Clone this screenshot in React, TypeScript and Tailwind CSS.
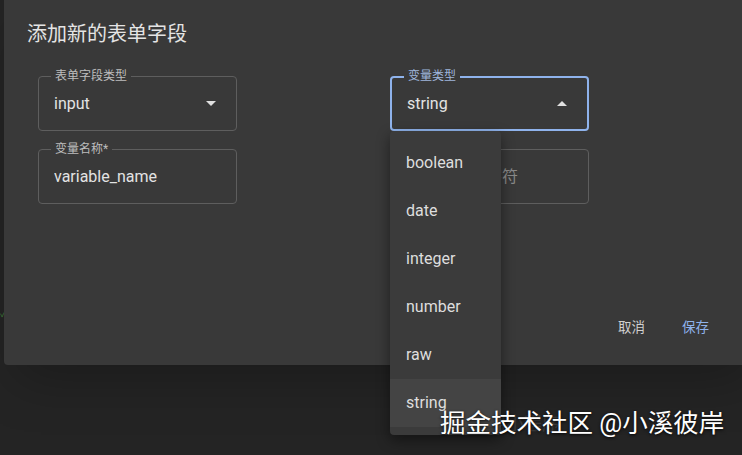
// Add-form-field dialog with the variable type select opened

const FONT = { fontFamily: '"Roboto", "Noto Sans CJK SC", "Noto Sans", sans-serif' };

const TYPES = ['boolean', 'date', 'integer', 'number', 'raw', 'string'];

function Caret({ up = false }: { up?: boolean }) {
  return (
    <svg width="10" height="5" viewBox="0 0 10 5" className="shrink-0">
      {up ? <path d="M0 5 L5 0 L10 5 Z" fill="#e0e0e0" /> : <path d="M0 0 L5 5 L10 0 Z" fill="#e0e0e0" />}
    </svg>
  );
}

function OutlinedField({
  label,
  value,
  placeholder,
  focused = false,
  select,
}: {
  label?: string;
  value?: string;
  placeholder?: string;
  focused?: boolean;
  select?: 'up' | 'down';
}) {
  return (
    <div
      className={`relative flex h-[55px] w-[199px] items-center rounded-[4px] px-[15px] ${
        focused ? 'border-2 border-[#8fb3ec] px-[14px]' : 'border border-[#5e5e5e]'
      }`}
    >
      {label && (
        <span
          className={`absolute left-[12px] top-[-9px] bg-[#393939] px-[4px] text-[12px] leading-[16px] ${
            focused ? 'left-[11px] top-[-10px] text-[#9fb6dc]' : 'text-[#bdbdbd]'
          }`}
        >
          {label}
        </span>
      )}
      <span className={`flex-1 truncate ${value ? 'text-[16px] text-[#e3e3e3]' : 'text-[16px] text-[#8a8a8a]'}`}>
        {value ?? placeholder}
      </span>
      {select && (
        <span className="mr-[5px]">
          <Caret up={select === 'up'} />
        </span>
      )}
    </div>
  );
}

export default function App() {
  return (
    <div className="relative h-[455px] w-[742px] overflow-hidden bg-[#242424]" style={FONT}>
      {/* underlying page, mostly hidden */}
      <span className="absolute left-[0px] top-[306px] text-[10px] text-[#3f7a3a]">✓</span>
      <span className="absolute left-[470px] top-[410px] text-[18px] text-[#3c3c3c]">调用小程序</span>

      {/* dialog */}
      <div className="absolute left-[4px] top-[-6px] flex h-[371px] w-[760px] flex-col rounded-[4px] bg-[#393939] shadow-2xl">
        <h2 className="pl-[23px] pt-[26px] text-[20px] leading-[28px] text-[#e4e4e4]">添加新的表单字段</h2>

        <div className="mt-[28px] grid w-[552px] grid-cols-[199px_199px] gap-x-[153px] gap-y-[18px] pl-[34px]">
          <OutlinedField label="表单字段类型" value="input" select="down" />
          <OutlinedField label="变量类型" value="string" select="up" focused />
          <OutlinedField label="变量名称*" value="variable_name" />
          <OutlinedField placeholder="请填写默认字符" />
        </div>

        <div className="mt-auto mb-[28px] flex justify-end gap-[37px] pr-[55px] text-[13.5px]">
          <button className="text-[#d0d0d0]">取消</button>
          <button className="text-[#8fb3ec]">保存</button>
        </div>
      </div>

      {/* open select menu */}
      <ul className="absolute left-[390px] top-[131px] w-[111px] rounded-[4px] bg-[#3b3b3b] py-[8px] shadow-[0_5px_14px_rgba(0,0,0,0.45)]">
        {TYPES.map((t) => (
          <li
            key={t}
            className={`flex h-[48px] items-center px-[16px] text-[16px] text-[#dedede] ${
              t === 'string' ? 'bg-[#444444]' : ''
            }`}
          >
            {t}
          </li>
        ))}
      </ul>

      {/* watermark */}
      <span
        className="absolute left-[440px] top-[406px] text-[25.5px] leading-[34px] text-white"
        style={{ textShadow: '0 1px 3px rgba(0,0,0,0.9)' }}
      >
        掘金技术社区 @小溪彼岸
      </span>
    </div>
  );
}
